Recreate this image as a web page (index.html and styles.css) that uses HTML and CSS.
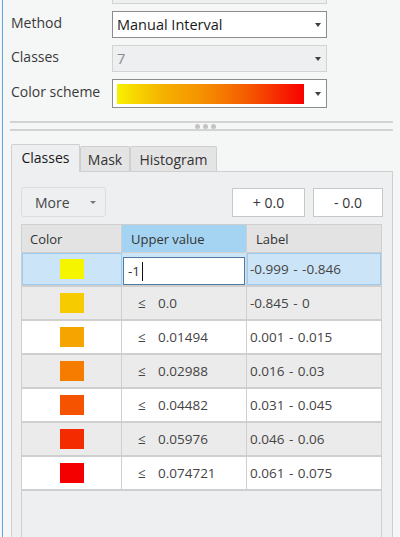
FILE: index.html
```html
<!DOCTYPE html>
<html>
<head>
<meta charset="utf-8">
<link rel="stylesheet" href="styles.css">
</head>
<body>
<div class="page">
  <div class="form">
    <div></div><div class="field partial"></div>
    <div class="lbl">Method</div>
    <div class="field combo"><span class="val">Manual Interval</span><i class="caret"></i></div>
    <div class="lbl">Classes</div>
    <div class="field combo disabled"><span class="val">7</span><i class="caret"></i></div>
    <div class="lbl">Color scheme</div>
    <div class="field combo scheme"><span class="ramp"></span><i class="caret"></i></div>
  </div>

  <div class="splitter"><span class="dot"></span><span class="dot"></span><span class="dot"></span></div>

  <div class="tabs">
    <div class="tab active">Classes</div>
    <div class="tab mask">Mask</div>
    <div class="tab hist">Histogram</div>
  </div>

  <div class="panel">
    <div class="toolbar">
      <div class="more">More<i class="caret small"></i></div>
      <div class="spacer"></div>
      <div class="btn plus">+ 0.0</div>
      <div class="btn minus">- 0.0</div>
    </div>

    <div class="grid">
      <div class="row head">
        <div class="c1">Color</div>
        <div class="c2 sorted">Upper value</div>
        <div class="c3">Label</div>
      </div>
      <div class="row sel">
        <div class="c1"><span class="sw" style="background:#f5f500"></span></div>
        <div class="c2"><div class="edit">-1<span class="cursor"></span></div></div>
        <div class="c3">-0.999 - -0.846</div>
      </div>
      <div class="row alt">
        <div class="c1"><span class="sw" style="background:#f6cc00"></span></div>
        <div class="c2"><span class="le">≤</span>0.0</div>
        <div class="c3">-0.845 - 0</div>
      </div>
      <div class="row">
        <div class="c1"><span class="sw" style="background:#f6a500"></span></div>
        <div class="c2"><span class="le">≤</span>0.01494</div>
        <div class="c3">0.001 - 0.015</div>
      </div>
      <div class="row alt">
        <div class="c1"><span class="sw" style="background:#f67c00"></span></div>
        <div class="c2"><span class="le">≤</span>0.02988</div>
        <div class="c3">0.016 - 0.03</div>
      </div>
      <div class="row">
        <div class="c1"><span class="sw" style="background:#f65300"></span></div>
        <div class="c2"><span class="le">≤</span>0.04482</div>
        <div class="c3">0.031 - 0.045</div>
      </div>
      <div class="row alt">
        <div class="c1"><span class="sw" style="background:#f52b00"></span></div>
        <div class="c2"><span class="le">≤</span>0.05976</div>
        <div class="c3">0.046 - 0.06</div>
      </div>
      <div class="row">
        <div class="c1"><span class="sw" style="background:#f50000"></span></div>
        <div class="c2"><span class="le">≤</span>0.074721</div>
        <div class="c3">0.061 - 0.075</div>
      </div>
    </div>
  </div>
</div>
</body>
</html>
```

FILE: styles.css
```css
html, body {
  margin: 0;
  padding: 0;
}
body {
  width: 400px;
  height: 537px;
  overflow: hidden;
  background: #f5f6f6;
  font-family: "Open Sans", "Noto Sans", "DejaVu Sans", sans-serif;
  color: #333;
}
.page {
  margin-left: 2px;
  border-left: 1px solid #5ea6dc;
  min-height: 537px;
}

/* form */
.form {
  margin-left: 8px;
  display: grid;
  grid-template-columns: 101px 215px;
  grid-template-rows: 4px 27px 27px 29px;
  row-gap: 7px;
}
.lbl {
  font-size: 14px;
  color: #3a3a3a;
  display: flex;
  align-items: center;
  padding-bottom: 4px;
}
.field {
  box-sizing: border-box;
  border: 1px solid #8c8c8c;
  background: #fff;
}
.field.partial {
  border: 1px solid #d3d3d3;
  border-top: none;
  background: #eeeff1;
}
.combo {
  display: flex;
  align-items: center;
  padding-left: 4px;
  padding-right: 4px;
}
.combo .val {
  flex: 1;
  font-size: 14.5px;
  color: #1a1a1a;
}
.combo.disabled {
  border-color: #d3d3d3;
  background: #eeeff1;
}
.combo.disabled .val {
  color: #8a8a8a;
}
.ramp {
  flex: 1;
  height: 20px;
  margin-right: 11px;
  background: linear-gradient(to right, #f7f000 0%, #f5b000 25%, #f59200 45%, #f55a00 70%, #f80000 100%);
}
.caret {
  width: 0;
  height: 0;
  border-left: 3.5px solid transparent;
  border-right: 3.5px solid transparent;
  border-top: 4px solid #404040;
  margin-right: 1px;
}
.caret.small {
  border-left-width: 3px;
  border-right-width: 3px;
  border-top: 3px solid #777;
}

/* splitter */
.splitter {
  margin: 13px 7px 0 7px;
  height: 6px;
  border-top: 2px solid #d3d3d3;
  border-bottom: 2px solid #d3d3d3;
  display: flex;
  justify-content: center;
  align-items: center;
  gap: 3px;
  padding-left: 7px;
}
.dot {
  width: 5px;
  height: 5px;
  border-radius: 50%;
  background: #c4c4c4;
}

/* tabs */
.tabs {
  margin: 13px 7px 0 8px;
  height: 27px;
  display: flex;
  align-items: flex-end;
  position: relative;
  z-index: 1;
}
.tab {
  box-sizing: border-box;
  height: 25px;
  border: 1px solid #cfcfcf;
  border-bottom: none;
  border-radius: 2px 2px 0 0;
  background: #e4e4e4;
  font-size: 14px;
  color: #333;
  display: flex;
  align-items: center;
  justify-content: center;
}
.tab.active {
  width: 69px;
  height: 28px;
  margin-bottom: -1px;
  background: #eeeff1;
  color: #1a1a1a;
  padding-bottom: 2px;
}
.tab.mask {
  width: 50px;
}
.tab.hist {
  width: 87px;
}

/* panel */
.panel {
  margin: 0 7px 0 8px;
  border: 1px solid #cfcfcf;
  background: #eeeff1;
  padding: 15px 9px 0 9px;
  min-height: 500px;
}
.toolbar {
  display: flex;
  align-items: flex-start;
  gap: 8px;
  height: 30px;
}
.more {
  box-sizing: border-box;
  width: 85px;
  height: 30px;
  border: 1px solid #dcdcdc;
  border-radius: 3px;
  display: flex;
  align-items: center;
  justify-content: space-between;
  padding: 0 8px 0 13px;
  font-size: 14px;
  color: #454545;
}
.spacer {
  flex: 1;
}
.btn {
  box-sizing: border-box;
  height: 29px;
  margin-top: 1px;
  border: 1px solid #c8c8c8;
  background: #fff;
  font-size: 14px;
  color: #333;
  display: flex;
  align-items: center;
  justify-content: center;
}
.btn.plus {
  width: 73px;
}
.btn.minus {
  width: 70px;
}

/* grid */
.grid {
  margin-top: 7px;
  margin-right: 1px;
  border: 1px solid #cfcfcf;
  min-height: 400px;
  font-size: 13.5px;
}
.row {
  display: grid;
  grid-template-columns: 100px 125px 1fr;
  height: 34px;
  box-sizing: border-box;
  border-bottom: 2px solid #cfcfcf;
  background: #fff;
  color: #444;
}
.row.alt {
  background: #ebebeb;
}
.row > div {
  display: flex;
  align-items: center;
  box-sizing: border-box;
}
.row .c1 {
  justify-content: center;
  border-right: 1px solid #d0d0d0;
}
.row .c2 {
  border-right: 1px solid #d0d0d0;
  padding-left: 16px;
}
.row .c3 {
  padding-left: 3px;
  word-spacing: 1px;
}
.le {
  display: inline-block;
  width: 20px;
}
.sw {
  width: 24px;
  height: 20px;
}
.row.head {
  height: 28px;
  border-bottom: 1px solid #d0d0d0;
  background: #e3e3e3;
  color: #333;
  font-size: 13px;
}
.row.head .c1 {
  justify-content: flex-start;
  padding-left: 8px;
}
.row.head .c2 {
  padding-left: 9px;
  background: #a5d4f2;
}
.row.head .c3 {
  padding-left: 9px;
  word-spacing: normal;
}
.row.sel {
  background: #cce4f7;
  border-bottom-color: #cfcfcf;
}
.row.sel .c1,
.row.sel .c3 {
  box-shadow: inset 0 0 0 1px #9ccbf0;
  border-right: none;
}
.row.sel .c2 {
  padding: 0 1px;
  align-items: flex-end;
  border-right: 1px solid #d0d0d0;
}
.edit {
  box-sizing: border-box;
  width: 100%;
  height: 28px;
  border: 1px solid #52799f;
  background: #fff;
  display: flex;
  align-items: center;
  padding-left: 4px;
  color: #333;
}
.cursor {
  display: inline-block;
  width: 1px;
  height: 19px;
  background: #111;
  margin-left: 2px;
}
```
